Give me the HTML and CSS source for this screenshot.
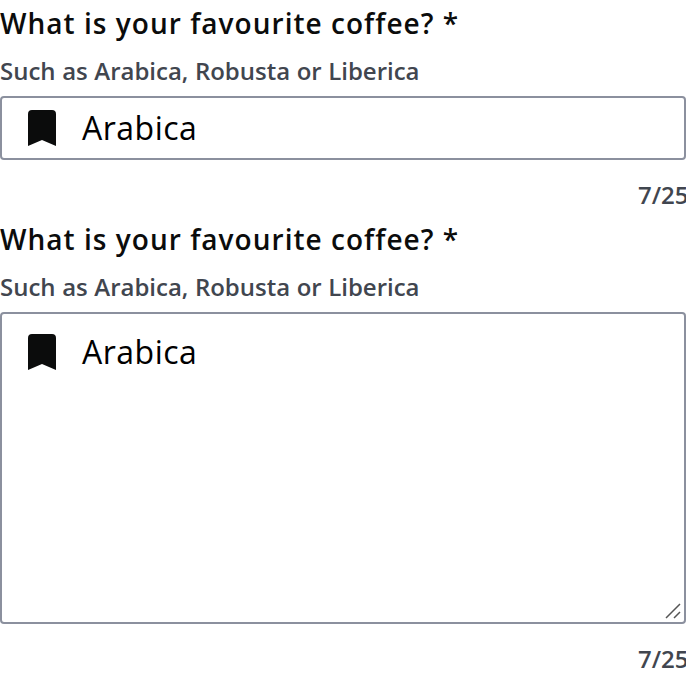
FILE: index.html
```html
<!DOCTYPE html>
<html lang="en">
<head>
<meta charset="utf-8">
<title>Text field</title>
<link rel="stylesheet" href="styles.css">
</head>
<body>
<div class="field">
  <div class="label">What is your favourite coffee? *</div>
  <div class="helper">Such as Arabica, Robusta or Liberica</div>
  <div class="box">
    <svg class="icon" viewBox="0 0 28 36"><path d="M4 0H24Q28 0 28 4V36L14 30L0 36V4Q0 0 4 0Z"/></svg>
    <span class="value">Arabica</span>
  </div>
  <div class="count">7/25</div>
</div>
<div class="field">
  <div class="label">What is your favourite coffee? *</div>
  <div class="helper">Such as Arabica, Robusta or Liberica</div>
  <div class="box multiline">
    <svg class="icon" viewBox="0 0 28 36"><path d="M4 0H24Q28 0 28 4V36L14 30L0 36V4Q0 0 4 0Z"/></svg>
    <span class="value">Arabica</span>
    <svg class="grip" viewBox="0 0 16 16"><path d="M1 15L15 1M9 15L15 9"/></svg>
  </div>
  <div class="count">7/25</div>
</div>
</body>
</html>
```
FILE: styles.css
```css
* { box-sizing: border-box; }
body { margin: 0; min-height: 680px; background: #fff; color: #0b0c0c; font-family: "Open Sans", sans-serif; overflow: hidden; }
.field { white-space: nowrap; }
.label { height: 48px; line-height: 46px; font-size: 28px; font-weight: 600; letter-spacing: 1.03px; }
.helper { height: 48px; line-height: 46px; font-size: 24px; font-weight: 600; letter-spacing: -0.02px; word-spacing: 0.4px; color: #41464f; }
.box { position: relative; display: flex; align-items: center; gap: 26px; height: 64px; padding: 0 26px; border: 2px solid #8b909e; border-radius: 4px; }
.icon { width: 28px; height: 36px; fill: #0b0c0c; }
.value { font-size: 32px; line-height: 48px; letter-spacing: 0.5px; color: #000; }
.multiline { height: 312px; align-items: flex-start; padding-top: 14px; }
.multiline .icon { margin-top: 6px; }
.grip { position: absolute; right: 3px; bottom: 3px; width: 16px; height: 16px; fill: none; stroke: #555; stroke-width: 1.5; }
.count { height: 56px; padding-top: 19px; line-height: 32px; font-size: 24px; font-weight: 600; color: #41464f; margin-left: 638px; }
```
